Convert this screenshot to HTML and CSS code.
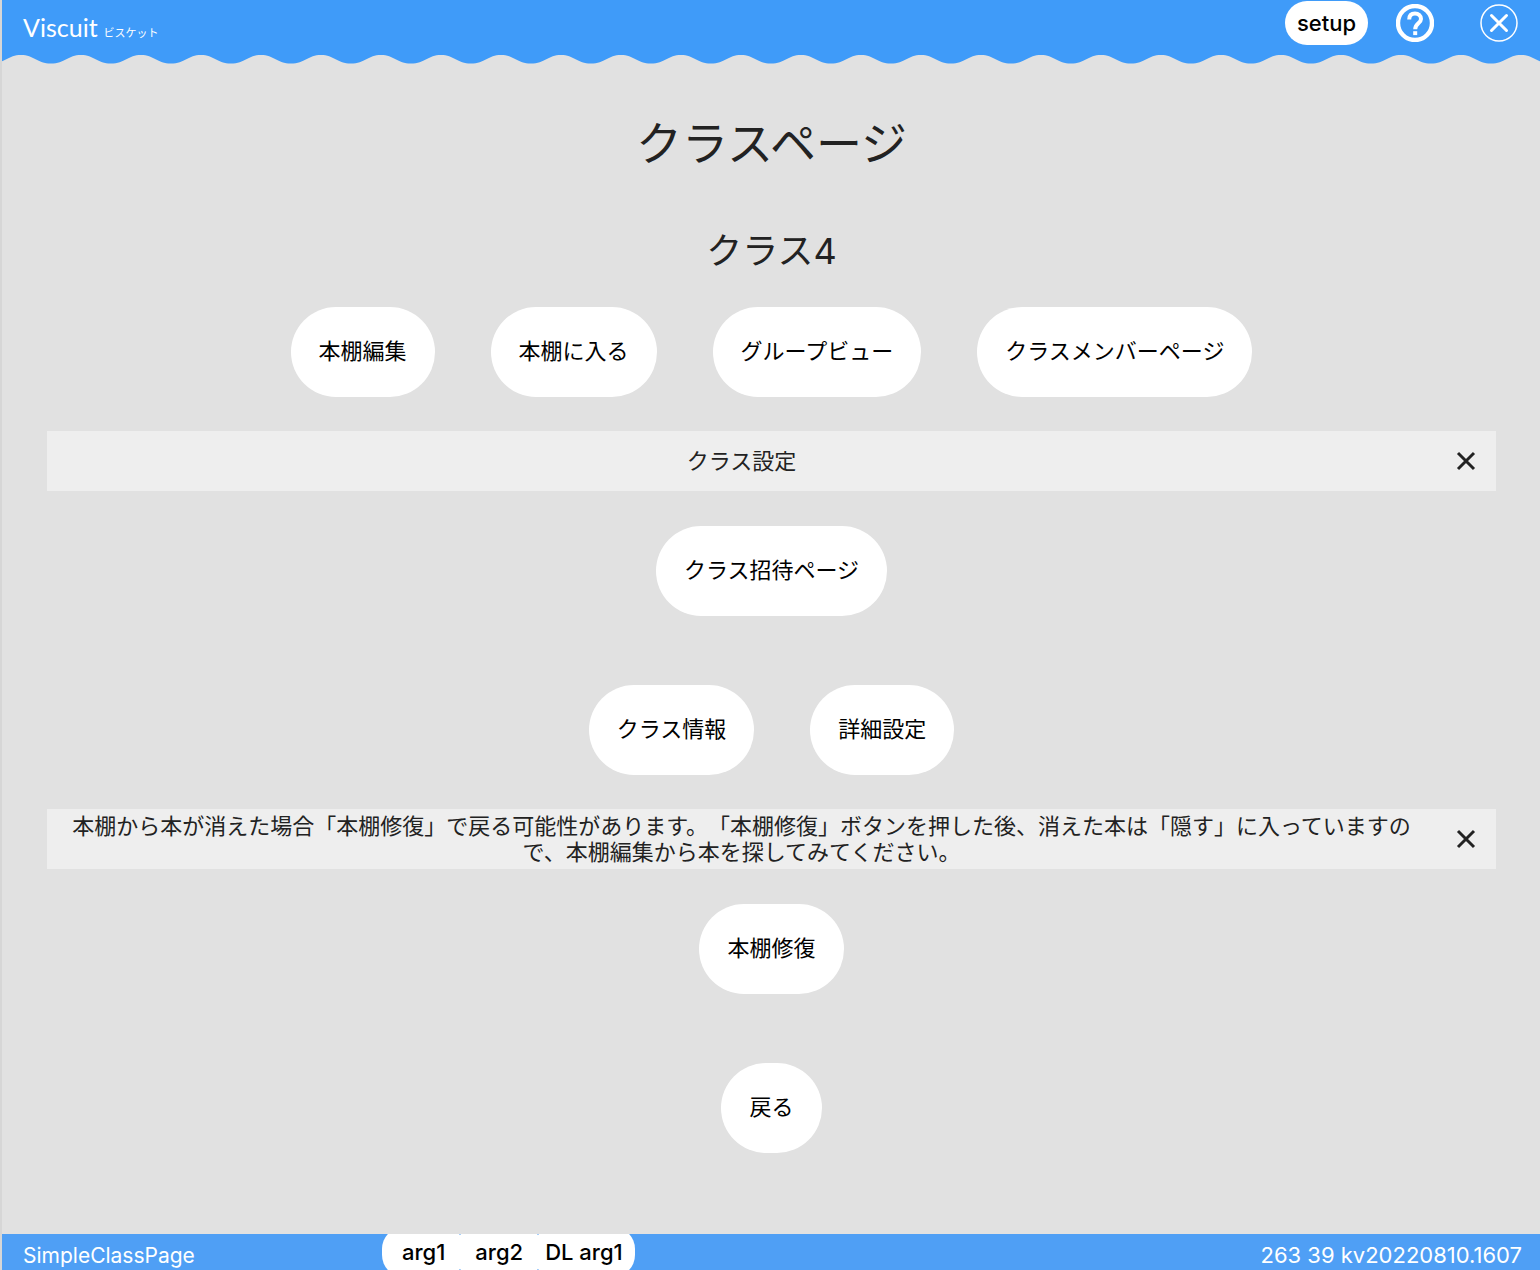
FILE: index.html
```html
<!DOCTYPE html>
<html lang="ja">
<head>
<meta charset="utf-8">
<meta name="viewport" content="width=device-width, initial-scale=1">
<title>クラスページ</title>
<link rel="stylesheet" href="styles.css">
</head>
<body>
<header class="header">
  <div class="topbar">
    <a class="logo" href="#"><span class="logo-name">Viscuit</span><span class="logo-kana">ビスケット</span></a>
    <div class="tools">
      <button class="setup" type="button">setup</button>
      <button class="icon-button" type="button" aria-label="ヘルプ">
        <svg width="38" height="38" viewBox="0 0 38 38" fill="none" stroke="#fff">
          <circle cx="19" cy="19" r="17" stroke-width="4.400"/>
          <path d="M13.200 15.600C13.200 11.500 15.600 9.500 19 9.500S25 11.800 25 15C25 19.300 19.200 19.600 19.200 25.200" stroke-width="4"/>
          <path d="M17.200 27.200h4v3.900h-4z" fill="#fff" stroke="none"/>
        </svg>
      </button>
      <button class="icon-button close-page" type="button" aria-label="閉じる">
        <svg width="38" height="38" viewBox="0 0 38 38" fill="none" stroke="#fff">
          <circle cx="19" cy="19" r="18" stroke-width="1.500"/>
          <path d="M11.500 11.500l15 15M26.500 11.500l-15 15" stroke-width="3" stroke-linecap="round"/>
        </svg>
      </button>
    </div>
  </div>
  <svg class="wave" aria-hidden="true">
    <defs>
      <pattern id="wave" width="60" height="10" x="19" patternUnits="userSpaceOnUse">
        <path d="M0 0V1C13 1 16 9.500 30 9.500S47 1 60 1V0Z" fill="#3f9bf9"/>
      </pattern>
    </defs>
    <rect width="100%" height="10" fill="url(#wave)"/>
  </svg>
</header>

<main class="main">
  <h1 class="title">クラスページ</h1>
  <h2 class="class-name">クラス4</h2>

  <div class="row">
    <button class="pill" type="button">本棚編集</button>
    <button class="pill" type="button">本棚に入る</button>
    <button class="pill" type="button">グループビュー</button>
    <button class="pill" type="button">クラスメンバーページ</button>
  </div>

  <section class="notice">
    <p class="notice-text">クラス設定</p>
    <button class="notice-close" type="button" aria-label="閉じる">
      <svg width="20" height="20" viewBox="0 0 20 20" stroke="#222" stroke-width="3"><path d="M2 2l16 16M18 2l-16 16"/></svg>
    </button>
  </section>

  <div class="row">
    <button class="pill" type="button">クラス招待ページ</button>
  </div>
  <div class="row">
    <button class="pill" type="button">クラス情報</button>
    <button class="pill" type="button">詳細設定</button>
  </div>

  <section class="notice">
    <p class="notice-text">本棚から本が消えた場合「本棚修復」で戻る可能性があります。「本棚修復」ボタンを押した後、消えた本は「隠す」に入っていますので、本棚編集から本を探してみてください。</p>
    <button class="notice-close" type="button" aria-label="閉じる">
      <svg width="20" height="20" viewBox="0 0 20 20" stroke="#222" stroke-width="3"><path d="M2 2l16 16M18 2l-16 16"/></svg>
    </button>
  </section>

  <div class="row">
    <button class="pill" type="button">本棚修復</button>
  </div>
  <div class="row">
    <button class="pill" type="button">戻る</button>
  </div>
</main>

<footer class="footer">
  <span class="page-name">SimpleClassPage</span>
  <div class="args">
    <button class="arg" type="button">arg1</button>
    <button class="arg" type="button">arg2</button>
    <button class="arg arg-download" type="button">DL arg1</button>
  </div>
  <span class="version">263 39 kv20220810.1607</span>
</footer>
</body>
</html>
```
FILE: styles.css
```css
* {
  box-sizing: border-box;
}

body {
  margin: 0;
  min-height: 100vh;
  display: flex;
  flex-direction: column;
  border-left: 2px solid #d6d6d6;
  background: #e1e1e1;
  color: #222;
  font-family: Inter, "Noto Sans CJK JP", sans-serif;
  font-size: 22px;
  text-spacing-trim: space-all;
}

button {
  border: 0;
  padding: 0;
  background: #fff;
  color: #000;
  font: inherit;
  cursor: pointer;
}

svg {
  display: block;
}

.topbar {
  display: flex;
  justify-content: space-between;
  height: 54px;
  padding: 0 22px 8px 21px;
  background: #3f9bf9;
}

.logo {
  display: flex;
  align-items: baseline;
  gap: 6px;
  padding-top: 10px;
  color: #fff;
  text-decoration: none;
}

.logo-name {
  font-family: Lato, sans-serif;
  font-size: 25px;
  line-height: 34px;
}

.logo-kana {
  font-size: 11px;
}

.tools {
  display: flex;
  align-items: center;
}

.setup {
  height: 44px;
  padding: 0 12px;
  border-radius: 22px;
  font-weight: 500;
}

.icon-button {
  margin-left: 28px;
  background: none;
}

.close-page {
  margin-left: 46px;
}

.wave {
  width: 100%;
  height: 10px;
}

.main {
  flex: 1;
  padding: 47px 44px 44px 45px;
}

.title,
.class-name {
  margin: 0;
  font-weight: 400;
  text-align: center;
}

.title {
  font-size: 46px;
  line-height: 64px;
}

.class-name {
  margin-top: 55px;
  font-size: 36px;
  line-height: 42px;
}

.row {
  display: flex;
  flex-wrap: wrap;
  justify-content: center;
  gap: 34px 56px;
  padding: 35px 0 34px;
}

.pill {
  height: 90px;
  padding: 0 28px 6px;
  border-radius: 45px;
}

.notice {
  display: flex;
  min-height: 60px;
  background: #eee;
}

.notice-text {
  flex: 1;
  align-self: center;
  margin: 0;
  padding: 0 20px;
  line-height: 26px;
  text-align: center;
}

.notice-close {
  display: grid;
  place-items: center;
  width: 60px;
  background: none;
}

.footer {
  display: grid;
  grid-template-columns: 380px auto 1fr;
  align-items: center;
  height: 36px;
  padding-right: 18px;
  overflow: hidden;
  background: #4f9ff5;
  color: #fff;
}

.page-name {
  padding: 6px 0 0 21px;
  font-size: 21px;
}

.args {
  display: flex;
  align-self: center;
  margin: -7px 0;
}

.arg {
  height: 50px;
  padding: 0 20px;
  border-radius: 22px;
  font-weight: 500;
}

.arg + .arg {
  margin-left: -10px;
}

.arg-download {
  padding: 0 12px;
}

.version {
  padding-top: 6px;
  text-align: right;
}
```
